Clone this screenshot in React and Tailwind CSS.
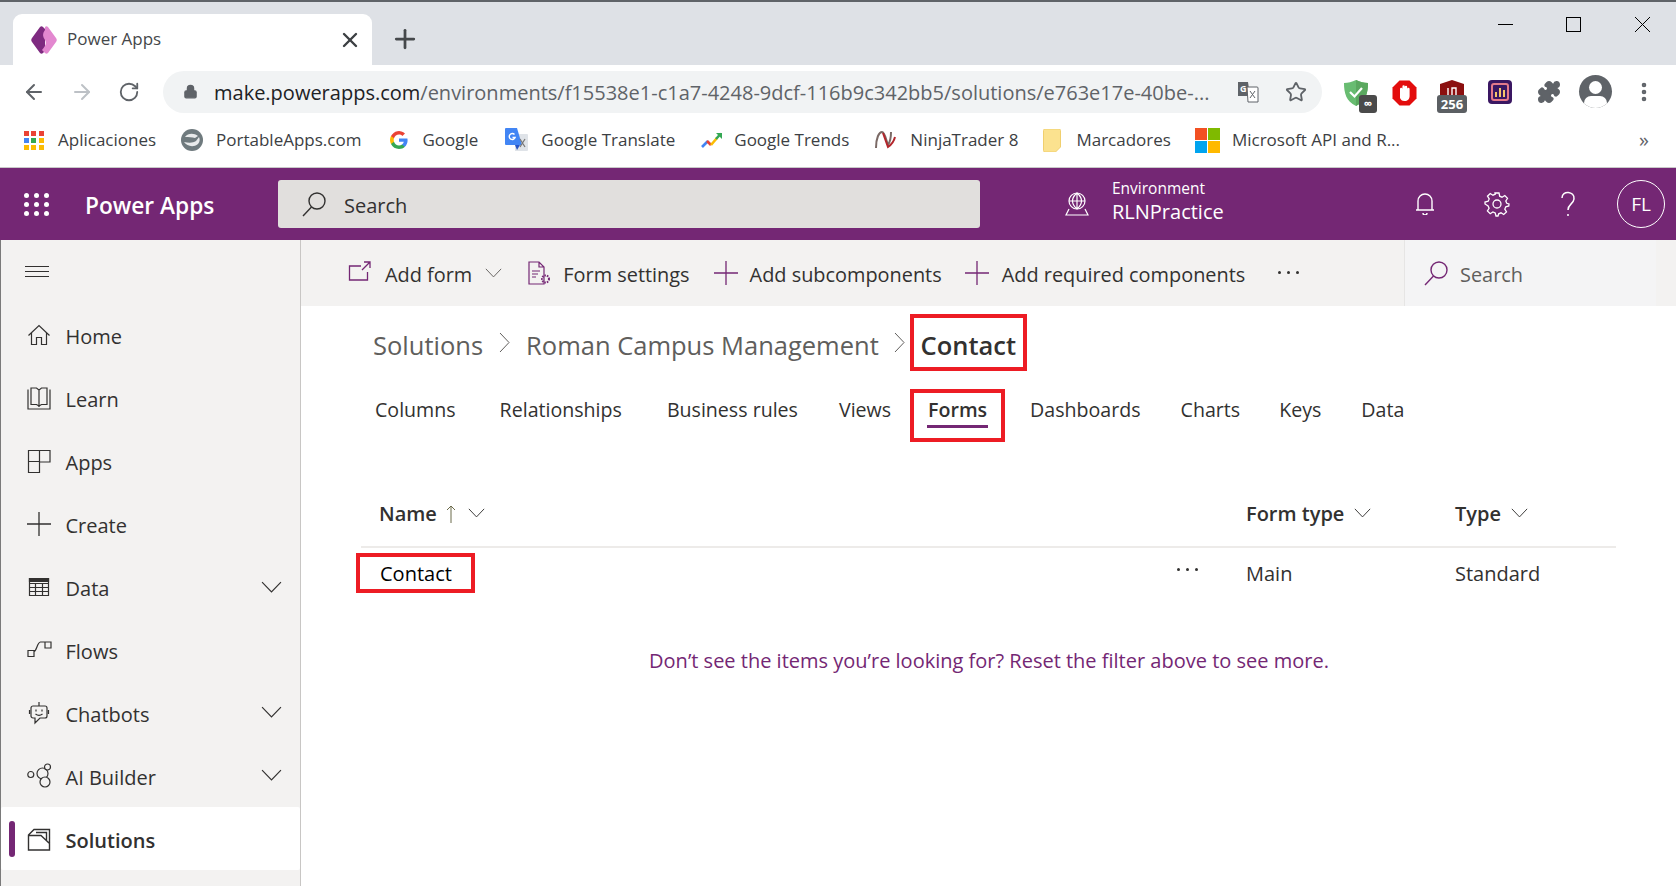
import { Lock, Star, Puzzle, EllipsisVertical, ArrowLeft, ArrowRight, RotateCw, X, Plus } from 'lucide-react';

const FONT = "font-['Open_Sans',sans-serif]";

function Svg({ size = 24, vb = 24, children, className = '', sw = 1.2, color = 'currentColor' }) {
  return (
    <svg width={size} height={size} viewBox={`0 0 ${vb} ${vb}`} fill="none" stroke={color} strokeWidth={sw} className={`shrink-0 ${className}`}>
      {children}
    </svg>
  );
}

const Chevron = ({ w = 20, className = '', color = '#323130' }) => (
  <svg width={w} height={w * 0.6} viewBox="0 0 20 12" fill="none" stroke={color} strokeWidth="1.1" className={`shrink-0 ${className}`}>
    <path d="M1 1l9 9.5L19 1" />
  </svg>
);

const SearchGlass = ({ color = '#323130', size = 26 }) => (
  <Svg size={size} vb={26} color={color} sw={1.4}>
    <circle cx="16" cy="10" r="8" />
    <path d="M10.5 16L2 25" />
  </Svg>
);

const PlusThin = () => (
  <Svg size={26} vb={26} color="#742774" sw={1.3}>
    <path d="M13 1v24M1 13h24" />
  </Svg>
);

/* sidebar icons */
const navIcons = {
  Home: (
    <Svg size={24} vb={24} color="#323130">
      <path d="M1.5 12.5L12 2.5l10.5 10M4.5 10v11.5h5v-7h5v7h5V10" />
    </Svg>
  ),
  Learn: (
    <Svg size={24} vb={24} color="#323130">
      <path d="M1 3.500v19.500h22V3.500M4 2h5.500L12 4v16l-2.500-1.500H4zM20 2h-5.500L12 4v16l2.500-1.500H20z" />
    </Svg>
  ),
  Apps: (
    <Svg size={24} vb={24} color="#323130">
      <path d="M1.500 1.500h21.500v11.500H12.500v10.500h-11zM1.500 12.500h11M12.500 1.500v11.500" />
    </Svg>
  ),
  Create: (
    <Svg size={24} vb={24} color="#323130" sw={1.3}>
      <path d="M12 0v24M0 12h24" />
    </Svg>
  ),
  Data: (
    <Svg size={22} vb={22} color="#323130">
      <path d="M1.500 2.500h19v17h-19zM1.500 7.500h19M1.500 11.500h19M1.500 15.500h19M7.500 7.500v12M14.500 7.500v12" />
      <path d="M1.500 2.500h19v3h-19z" fill="#323130" />
    </Svg>
  ),
  Flows: (
    <Svg size={25} vb={25} color="#323130">
      <path d="M1 13.500h6v6H1zM18 5h6v6h-6zM7 14.500c3 -1 3 -9 6.500 -9.500H18" />
    </Svg>
  ),
  Chatbots: (
    <Svg size={24} vb={24} color="#323130">
      <path d="M12 1v4M6 5h12a2 2 0 0 1 2 2v8a2 2 0 0 1-2 2h-5l-5 5v-5H6a2 2 0 0 1-2-2V7a2 2 0 0 1 2-2zM2.500 9v4M21.500 9v4M9 8.500v2M15 8.500v2M8.500 13c2 1.500 5 1.500 7 0" />
    </Svg>
  ),
  'AI Builder': (
    <Svg size={25} vb={25} color="#323130">
      <circle cx="3.800" cy="11.500" r="3" />
      <circle cx="15.500" cy="10.500" r="5.500" />
      <circle cx="20.500" cy="4" r="3" fill="#f3f2f1" />
      <circle cx="18" cy="19" r="5" fill="#f3f2f1" />
    </Svg>
  ),
  Solutions: (
    <Svg size={24} vb={24} color="#323130" sw={1.4}>
      <path d="M1.500 8L7 2.500h15.500V23h-21zM1.500 8.500H14l8.500 8M9 5.500h10.500V14" />
    </Svg>
  ),
};

const navItems = [
  ['Home'], ['Learn'], ['Apps'], ['Create'], ['Data', true], ['Flows'], ['Chatbots', true], ['AI Builder', true], ['Solutions', false, true],
];

const bookmarks = [
  ['Aplicaciones', 'ml-[24px] gap-[14px]', 'w-[20px]', 'apps'],
  ['PortableApps.com', 'ml-[25px] gap-[13px]', 'w-[22px]', 'portable'],
  ['Google', 'ml-[29px] gap-[14px]', 'w-[18px]', 'google'],
  ['Google Translate', 'ml-[27px] gap-[12px]', 'w-[24px]', 'translate'],
  ['Google Trends', 'ml-[26px] gap-[11px]', 'w-[22px]', 'trends'],
  ['NinjaTrader 8', 'ml-[26px] gap-[13px]', 'w-[22px]', 'ninja'],
  ['Marcadores', 'ml-[25px] gap-[15px]', 'w-[18px]', 'folder'],
  ['Microsoft API and R...', 'ml-[24px] gap-[12px]', 'w-[25px]', 'ms'],
];

function BookmarkIcon({ kind }) {
  if (kind === 'apps') {
    const c = ['#ea4335', '#ea4335', '#ea4335', '#4285f4', '#34a853', '#fbbc04', '#fbbc04', '#fbbc04', '#fbbc04'];
    return (
      <div className="grid grid-cols-3 gap-[2px] w-[20px]">
        {c.map((col, i) => (
          <span key={i} className="h-[5px] w-[5px]" style={{ background: col }} />
        ))}
      </div>
    );
  }
  if (kind === 'portable') return (
    <svg width="22" height="24" viewBox="0 0 22 24">
      <circle cx="11" cy="12" r="11" fill="#6f7a7e" />
      <path d="M4 9c3 -4 9 -4 13 -1l-3 2c-3 -1 -6 -1 -10 -1zM3 14c3 4 9 6 14 2c2 -2 2 -5 1 -7l-3 4c-3 2 -7 2 -12 1z" fill="#e8eaeb" />
    </svg>
  );
  if (kind === 'google') return (
    <svg width="18" height="18" viewBox="0 0 18 18">
      <path d="M17.600 9.200c0-.6-.1-1.200-.2-1.800H9v3.400h4.800a4.100 4.100 0 0 1-1.800 2.700v2.200h2.900c1.700-1.600 2.700-3.900 2.700-6.500z" fill="#4285f4" />
      <path d="M9 18c2.400 0 4.500-.8 5.900-2.200L12 13.600c-.8.500-1.800.9-3 .9-2.300 0-4.300-1.600-5-3.700H1v2.300A9 9 0 0 0 9 18z" fill="#34a853" />
      <path d="M4 10.700a5.400 5.400 0 0 1 0-3.400V5H1a9 9 0 0 0 0 8z" fill="#fbbc05" />
      <path d="M9 3.600c1.300 0 2.500.5 3.400 1.300L15 2.400A9 9 0 0 0 1 5l3 2.300c.7-2.100 2.700-3.700 5-3.700z" fill="#ea4335" />
    </svg>
  );
  if (kind === 'translate') return (
    <svg width="24" height="24" viewBox="0 0 24 24">
      <path d="M10 6h12a1 1 0 0 1 1 1v15a1 1 0 0 1-1 1H10z" fill="#dfe3e8" />
      <path d="M1 0h11l5 17H1a1 1 0 0 1-1-1V1a1 1 0 0 1 1-1z" fill="#4285f4" />
      <path d="M10 17h5l-3 5z" fill="#2a56c6" />
      <path d="M9.500 6.500a3 3 0 1 0 .6 3H7.500" stroke="#fff" strokeWidth="1.400" fill="none" />
      <path d="M15 11l5 8M20 11l-5 8" stroke="#777" strokeWidth="1.200" />
    </svg>
  );
  if (kind === 'trends') return (
    <svg width="22" height="16" viewBox="0 0 22 16" fill="none" strokeWidth="2.600">
      <path d="M1 15l6-6" stroke="#4285f4" />
      <path d="M6 9l4 4" stroke="#ea4335" />
      <path d="M10 13l6-7" stroke="#fbbc04" />
      <path d="M15 7l5-5.500" stroke="#34a853" />
      <path d="M15 1h6v6z" fill="#34a853" stroke="none" />
    </svg>
  );
  if (kind === 'ninja') return (
    <svg width="22" height="20" viewBox="0 0 22 20" fill="none">
      <path d="M1 18C1 8 4 2 7 2c3 0 4 8 6 13c2-3 3-8 3-13" stroke="#7b6a66" strokeWidth="2" />
      <path d="M8 3l5 14c3-2 6-6 7-10" stroke="#b3262c" strokeWidth="2" />
    </svg>
  );
  if (kind === 'folder') return (
    <svg width="18" height="23" viewBox="0 0 18 23">
      <path d="M2 0h14a1.500 1.500 0 0 1 1.500 1.500V18l-5 5H2a1.500 1.500 0 0 1-1.500-1.500v-20A1.500 1.500 0 0 1 2 0z" fill="#fbe28f" stroke="#f0cf6e" />
    </svg>
  );
  return (
    <div className="grid grid-cols-2 gap-[1px] w-[25px]">
      <span className="h-[12px] bg-[#f25022]" />
      <span className="h-[12px] bg-[#7fba00]" />
      <span className="h-[12px] bg-[#00a4ef]" />
      <span className="h-[12px] bg-[#ffb900]" />
    </div>
  );
}

function ChromeBar() {
  return (
    <div className="shrink-0 text-[#3c4043]">
      {/* tab strip */}
      <div className="h-[65px] bg-[#dee1e6] border-t-2 border-[#5f6368] flex items-end pl-[13px] relative">
        <div className="w-[359px] h-[51px] bg-white rounded-t-[9px] flex items-center pl-[18px] pr-[10px]">
          <svg width="26" height="28" viewBox="0 0 26 28" className="shrink-0">
            <path d="M9 1c1-1 2-1 3 0l2 2v22l-2 2c-1 1-2 1-3 0L1 16c-1-1-1-3 0-4z" fill="#7e2a80" />
            <path d="M14 1c1-1 2-1 3 0l8 11c1 1 1 3 0 4l-8 11c-1 1-2 1-3 0l-3-3c3-3 5-7 3-10-2-3-3-6 0-10z" fill="#e388d0" />
          </svg>
          <span className="ml-[10px] mb-[2px] text-[17px] text-[#45474a] flex-1">Power Apps</span>
          <X size={24} strokeWidth={2.400} color="#3c4043" />
        </div>
        <div className="mb-[11px] ml-[18px] text-[#45484b]">
          <Plus size={30} strokeWidth={2.200} />
        </div>
        <div className="ml-auto mb-[33px] flex items-center text-black">
          <span className="w-[15px] h-px bg-black mr-[53px]" />
          <span className="w-[15px] h-[15px] border border-black mr-[54px]" />
          <svg width="15" height="15" viewBox="0 0 15 15" stroke="#000" className="mr-[26px]"><path d="M0 0l15 15M15 0L0 15" /></svg>
        </div>
      </div>
      {/* address bar */}
      <div className="h-[53px] bg-white flex items-center pl-[22px]">
        <ArrowLeft size={24} strokeWidth={2} color="#5f6368" />
        <ArrowRight size={24} strokeWidth={2} color="#bdc1c6" className="ml-[24px]" />
        <RotateCw size={22} strokeWidth={2} color="#5f6368" className="ml-[24px]" />
        <div className="ml-[23px] w-[1159px] h-[42px] rounded-full bg-[#f1f3f4] flex items-center pl-[20px] pr-[15px]">
          <Lock size={15} fill="#5f6368" color="#5f6368" className="shrink-0" />
          <span className="ml-[16px] pt-[2px] text-[20px] whitespace-nowrap flex-1 overflow-hidden">
            <span className="text-[#202124]">make.powerapps.com</span>
            <span className="text-[#5f6368]">/environments/f15538e1-c1a7-4248-9dcf-116b9c342bb5/solutions/e763e17e-40be-...</span>
          </span>
          <svg width="22" height="22" viewBox="0 0 22 22" className="ml-[20px] shrink-0">
            <path d="M1 1h10l2 14H1z" fill="#5f6368" />
            <path d="M10 6h10a1 1 0 0 1 1 1v14H11z" fill="#fff" stroke="#5f6368" />
            <path d="M13 10l5 7M18 10l-5 7" stroke="#5f6368" />
            <text x="3" y="11" fontSize="9" fill="#fff" fontWeight="700">G</text>
          </svg>
          <Star size={22} strokeWidth={2} color="#5f6368" className="ml-[26px] shrink-0" />
        </div>
        {/* extensions */}
        <div className="relative ml-[22px] w-[33px] h-[33px] mt-[9px] shrink-0">
          <svg width="24" height="26" viewBox="0 0 24 26">
            <path d="M12 0c4 2 8 3 12 3 0 10-2 18-12 23C2 21 0 13 0 3c4 0 8-1 12-3z" fill="#68bc71" />
            <path d="M12 0v26c10-5 12-13 12-23-4 0-8-1-12-3z" fill="#5aa85f" />
            <path d="M6 12l4.500 4.500L18 8" stroke="#fff" strokeWidth="2.200" fill="none" />
          </svg>
          <span className="absolute left-[15px] top-[15px] w-[18px] h-[18px] bg-[#4a4a4a] rounded-[3px] text-white text-[12px] leading-[18px] text-center font-bold">∞</span>
        </div>
        <svg width="25" height="26" viewBox="0 0 25 26" className="ml-[15px] mt-[3px] shrink-0">
          <path d="M7.500 0.500h10l7 7v11l-7 7h-10l-7-7v-11z" fill="#e30d0d" />
          <path d="M8 18V9a1.200 1.200 0 0 1 2.400 0V6.500a1.200 1.200 0 0 1 2.400 0V7a1.200 1.200 0 0 1 2.400 0v2a1.200 1.200 0 0 1 2.400 0v7c0 3-2 5-5 5s-3.500-1-4.600-3z" fill="#fff" />
        </svg>
        <div className="relative ml-[20px] w-[30px] h-[33px] mt-[9px] shrink-0">
          <svg width="24" height="18" viewBox="0 0 24 18" className="absolute left-[3px] top-0">
            <path d="M12 0l12 4v14H0V4z" fill="#8b0f0f" />
            <path d="M8 8v8M12 8h4v8h-4z" stroke="#fff" strokeWidth="1.400" fill="none" />
          </svg>
          <div className="absolute left-0 bottom-0 w-[30px] h-[18px] rounded-[3px] bg-[#5b5f63] text-white text-[13px] leading-[18px] text-center font-bold">256</div>
        </div>
        <div className="relative ml-[21px] w-[24px] h-[24px] rounded-[4px] bg-[#3a1762] shrink-0">
          <div className="absolute inset-[3px] rounded-[3px] border-2 border-[#e47a8a] flex items-end justify-center gap-[2px] pb-[2px]">
            <span className="w-[2px] h-[5px] bg-[#f5c66b]" />
            <span className="w-[2px] h-[9px] bg-[#f5c66b]" />
            <span className="w-[2px] h-[7px] bg-[#f5c66b]" />
          </div>
        </div>
        <Puzzle size={24} fill="#5f6368" color="#5f6368" className="ml-[25px] shrink-0" />
        <div className="relative ml-[18px] w-[33px] h-[33px] rounded-full bg-[#5f6368] overflow-hidden shrink-0">
          <span className="absolute left-[10px] top-[6px] w-[13px] h-[13px] rounded-full bg-white" />
          <span className="absolute left-[5px] top-[21px] w-[23px] h-[14px] rounded-full bg-white" />
        </div>
        <EllipsisVertical size={24} strokeWidth={2.600} color="#5f6368" className="ml-[20px] shrink-0" />
      </div>
      {/* bookmarks */}
      <div className="h-[50px] bg-white border-b border-[#c9c9c9] flex items-center pb-[5px] relative text-[17px] text-[#3c4043]">
        {bookmarks.map(([label, ml, w, kind]) => (
          <div key={label} className={`flex items-center whitespace-nowrap ${ml}`}>
            <span className={`flex justify-center ${w}`}>
              <BookmarkIcon kind={kind} />
            </span>
            <span>{label}</span>
          </div>
        ))}
        <span className="ml-auto mr-[27px] text-[20px] text-[#5f6368]">»</span>
      </div>
    </div>
  );
}

function AppHeader() {
  return (
    <header className="shrink-0 h-[72px] bg-[#742774] flex items-center text-white">
      <div className="ml-[24px] shrink-0 grid grid-cols-3 gap-x-[5px] gap-y-[4px] w-[25px]">
        {Array.from({ length: 9 }).map((_, i) => (
          <span key={i} className="w-[5px] h-[5px] rounded-full bg-white" />
        ))}
      </div>
      <span className="ml-[36px] shrink-0 pt-[4px] text-[22.700px] font-semibold w-[193px]">Power Apps</span>
      <div className="shrink-0 w-[702px] h-[48px] bg-[#e1dfdd] rounded-[3px] flex items-center pl-[23px] text-[#323130] text-[20px]">
        <SearchGlass />
        <span className="ml-[17px] mt-[4px]">Search</span>
      </div>
      <Svg size={24} vb={24} color="#ffffff" className="ml-[85px]">
        <circle cx="12" cy="9" r="8" />
        <path d="M4 9h16M12 1v16M12 1c-6 5-6 11 0 16M12 1c6 5 6 11 0 16M4 17l-3 6h22l-3-6" />
      </Svg>
      <div className="ml-[23px] shrink-0 w-[302px] leading-none mb-[5px]">
        <div className="text-[15.500px]">Environment</div>
        <div className="text-[20px] mt-[6px]">RLNPractice</div>
      </div>
      <Svg size={22} vb={22} color="#ffffff" sw={1.400}>
        <path d="M4 17V8a7 7 0 0 1 14 0v9zM2 17h18M9 20a2 2 0 0 0 4 0" />
      </Svg>
      <Svg size={26} vb={26} color="#ffffff" sw={1.300} className="ml-[48px]">
        <circle cx="13" cy="13" r="4" />
        <path d="M11 2h4l.7 3.200 2.300 1 2.800-1.700 2.700 2.800-1.700 2.700 1 2.300L25 13l-.2 2-3 .8-1 2.300 1.700 2.800-2.800 2.600-2.700-1.700-2.300 1L14 25h-2l-.8-3-2.300-1-2.700 1.700-2.800-2.700 1.700-2.700-1-2.300L1 13v-2l3.200-.8 1-2.300-1.700-2.700L6.200 2.500l2.800 1.700 2.300-1z" />
      </Svg>
      <Svg size={26} vb={26} color="#ffffff" sw={1.500} className="ml-[45px]">
        <path d="M7 7c0-8 13-7 12 1c-.500 5-6 5-6 11M13 23v2" />
      </Svg>
      <div className="ml-[36px] shrink-0 w-[48px] h-[48px] rounded-full border border-white flex items-center justify-center text-[19px]">FL</div>
    </header>
  );
}

function Sidebar() {
  return (
    <aside className="shrink-0 w-[301px] bg-[#f3f2f1] border-r border-l border-r-[#c8c6c4] border-l-[#7a7a7a] flex flex-col text-[#323130]">
      <div className="h-[64px] shrink-0 flex items-center pl-[24px] pb-[1px]">
        <div className="w-[24px] h-[11px] border-y border-[#323130] flex items-center">
          <span className="w-full h-px bg-[#323130]" />
        </div>
      </div>
      {navItems.map(([label, hasChevron, active]) => (
        <div
          key={label}
          className={`relative h-[62.900px] shrink-0 flex items-center pl-[26px] pr-[18px] text-[20px] ${active ? 'bg-white font-semibold rounded-[2px]' : ''}`}
        >
          {active && <span className="absolute left-[8px] top-[14px] w-[6px] h-[36px] rounded-full bg-[#742774]" />}
          <span className="w-[24px] flex justify-center">{navIcons[label]}</span>
          <span className="ml-[14.500px] pt-[4px] flex-1">{label}</span>
          {hasChevron && <Chevron w={21} />}
        </div>
      ))}
    </aside>
  );
}

const commands = [
  {
    label: 'Form settings',
    ml: 'ml-[25px]',
    gap: 'gap-[12px]',
    icon: (
      <Svg size={24} vb={24} color="#742774" sw={1.200}>
        <path d="M2 1h10l5 5v17H2zM12 1v5h5M5 10h8M5 13h6M5 16h4" />
        <circle cx="18.500" cy="18" r="3.500" strokeWidth="2" strokeDasharray="1.500 1" />
      </Svg>
    ),
  },
  { label: 'Add subcomponents', ml: 'ml-[23px]', gap: 'gap-[11px]', icon: <PlusThin /> },
  { label: 'Add required components', ml: 'ml-[22px]', gap: 'gap-[12px]', icon: <PlusThin /> },
];

function CommandBar() {
  return (
    <div className="h-[66px] bg-[#f3f2f1] flex items-center text-[19.900px] text-[#323130] shrink-0">
      <div className="flex-1 flex items-center pl-[47px] whitespace-nowrap">
        <Svg size={24} vb={24} color="#742774" sw={1.300}>
          <path d="M13 5H1.500v14h18v-8M14 9l8-8M16 1h6v6" />
        </Svg>
        <span className="ml-[13px] pt-[4px]">Add form</span>
        <Chevron w={17} color="#605e5c" className="ml-[13px]" />
        {commands.map((c) => (
          <div key={c.label} className={`flex items-center ${c.ml} ${c.gap}`}>
            {c.icon}
            <span className="pt-[4px]">{c.label}</span>
          </div>
        ))}
        <div className="ml-[33px] flex gap-[6px]">
          <span className="w-[3px] h-[3px] rounded-full bg-[#323130]" />
          <span className="w-[3px] h-[3px] rounded-full bg-[#323130]" />
          <span className="w-[3px] h-[3px] rounded-full bg-[#323130]" />
        </div>
      </div>
      <div className="w-[252px] h-full mr-[20px] bg-[#f4f4f5] border-l border-[#e6e5e4] flex items-center pl-[18px] text-[#605e5c]">
        <SearchGlass color="#742774" />
        <span className="ml-[11px] pt-[4px]">Search</span>
      </div>
    </div>
  );
}

const tabs = [
  ['Columns', 'ml-[0px]'],
  ['Relationships', 'ml-[44px]'],
  ['Business rules', 'ml-[45px]'],
  ['Views', 'ml-[41px]'],
];
const tabsAfter = [
  ['Dashboards', 'ml-[25px]'],
  ['Charts', 'ml-[40px]'],
  ['Keys', 'ml-[39px]'],
  ['Data', 'ml-[40px]'],
];

function Content() {
  return (
    <main className="flex-1 min-w-0 flex flex-col bg-white">
      <CommandBar />
      {/* breadcrumb */}
      <div className="flex items-center pl-[72px] mt-[8px] text-[25.500px] text-[#605e5c] whitespace-nowrap">
        <span className="pt-[5px]">Solutions</span>
        <svg width="11" height="21" viewBox="0 0 11 21" fill="none" stroke="#605e5c" className="ml-[16px]"><path d="M1 1l9 9.500-9 9.500" /></svg>
        <span className="ml-[16px] pt-[5px]">Roman Campus Management</span>
        <svg width="11" height="21" viewBox="0 0 11 21" fill="none" stroke="#605e5c" className="ml-[15px]"><path d="M1 1l9 9.500-9 9.500" /></svg>
        <div className="ml-[5px] w-[117px] h-[57px] border-[4px] border-[#ed1c24] flex items-center justify-center pt-[5px] font-semibold text-[#323130]">Contact</div>
      </div>
      {/* tabs */}
      <div className="flex items-start pl-[74px] mt-[18px] text-[19.600px] leading-[27px] text-[#323130] whitespace-nowrap">
        {tabs.map(([t, ml]) => (
          <span key={t} className={`mt-[7px] ${ml}`}>{t}</span>
        ))}
        <div className="ml-[19px] w-[95px] h-[53px] border-[4px] border-[#ed1c24] flex flex-col items-center font-semibold">
          <span className="mt-[3px]">Forms</span>
          <span className="w-[61px] h-[3px] bg-[#742774] mt-[2px]" />
        </div>
        {tabsAfter.map(([t, ml]) => (
          <span key={t} className={`mt-[7px] ${ml}`}>{t}</span>
        ))}
      </div>
      {/* table */}
      <div className="ml-[60px] mr-[60px] mt-[40px] text-[20px] text-[#323130]">
        <div className="h-[66px] flex items-center pl-[18px] font-semibold border-b-2 border-[#edebe9]">
          <div className="w-[867px] flex items-center">
            <span>Name</span>
            <svg width="10" height="18" viewBox="0 0 10 18" fill="none" stroke="#6b6a4a" className="ml-[9px]"><path d="M5 18V1M1 5l4-4 4 4" /></svg>
            <Chevron w={17} className="ml-[12px] mb-[2px]" />
          </div>
          <div className="w-[209px] flex items-center">
            <span>Form type</span>
            <Chevron w={17} className="ml-[10px] mb-[2px]" />
          </div>
          <div className="flex items-center">
            <span>Type</span>
            <Chevron w={17} className="ml-[10px] mb-[2px]" />
          </div>
        </div>
        <div className="h-[47px] pt-[5px]">
          <div className="h-[40px] flex items-center">
            <div className="-ml-[5px] w-[119px] h-[40px] border-[4px] border-[#ed1c24] flex items-center pl-[20px] pt-[2px] text-black">Contact</div>
            <div className="ml-[702px] w-[69px] flex gap-[6px] mb-[8px]">
              <span className="w-[3px] h-[3px] rounded-full bg-[#323130]" />
              <span className="w-[3px] h-[3px] rounded-full bg-[#323130]" />
              <span className="w-[3px] h-[3px] rounded-full bg-[#323130]" />
            </div>
            <span className="w-[209px] pt-[2px]">Main</span>
            <span className="pt-[2px]">Standard</span>
          </div>
        </div>
      </div>
      <p className="mt-[51px] ml-[1px] text-center text-[20px] text-[#742774]">Don’t see the items you’re looking for? Reset the filter above to see more.</p>
    </main>
  );
}

export default function App() {
  return (
    <div className={`w-[1676px] h-[886px] overflow-hidden flex flex-col bg-white ${FONT}`}>
      <ChromeBar />
      <AppHeader />
      <div className="flex-1 min-h-0 flex">
        <Sidebar />
        <Content />
      </div>
    </div>
  );
}
